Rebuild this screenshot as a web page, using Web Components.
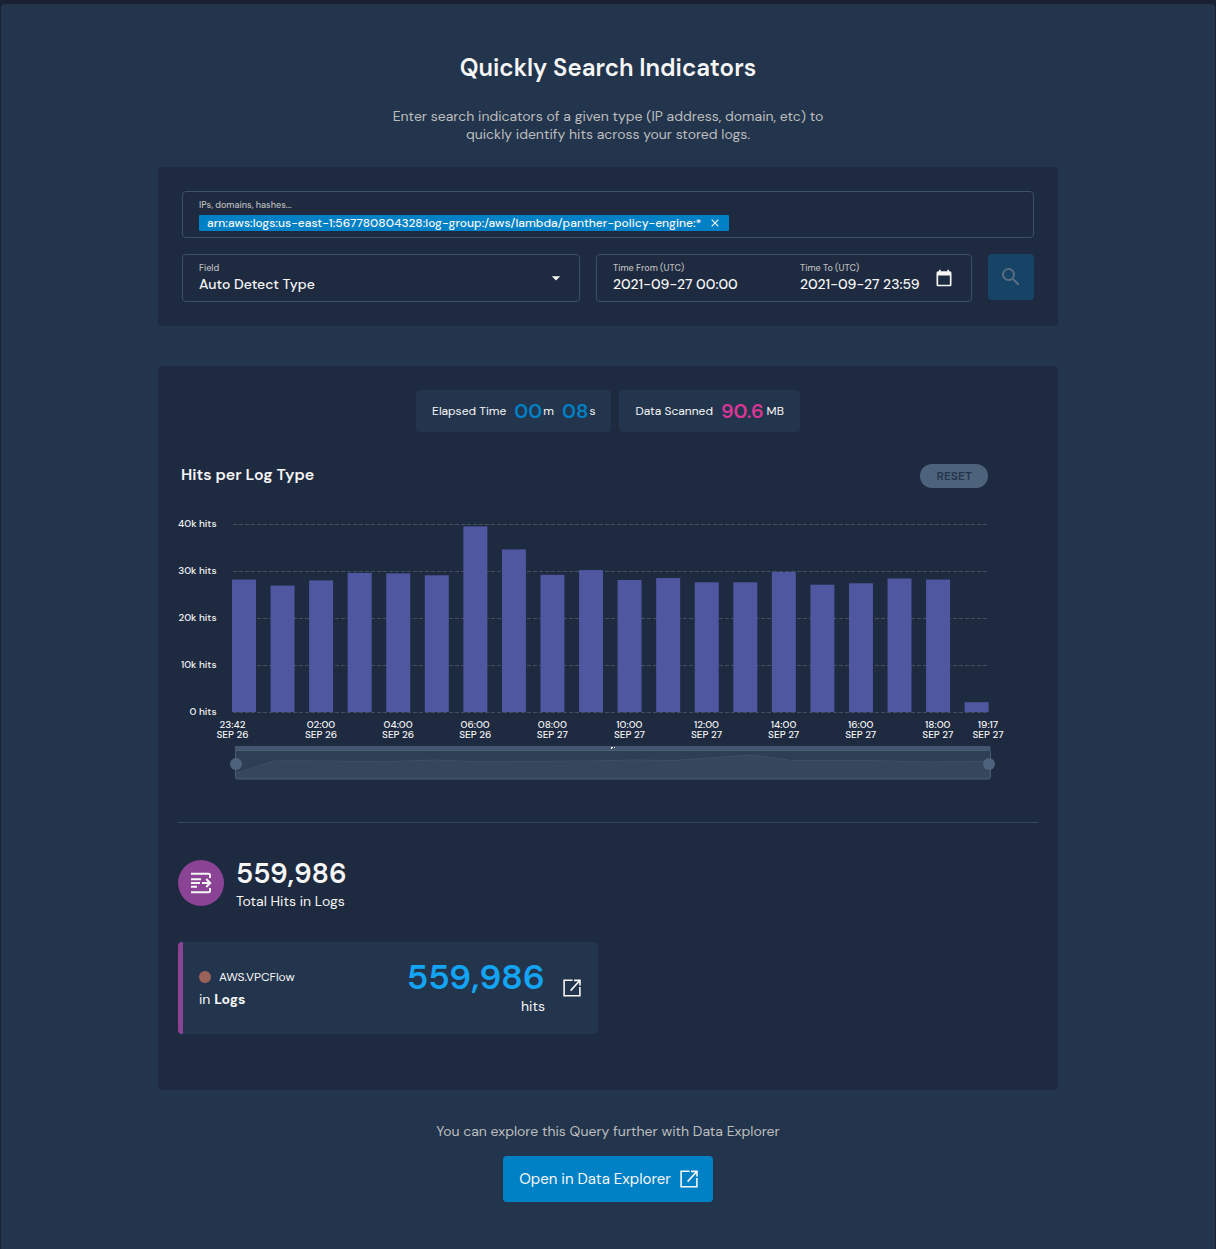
<!DOCTYPE html>
<html lang="en">
<head>
<meta charset="utf-8">
<meta name="viewport" content="width=device-width, initial-scale=1">
<title>Indicator Search</title>
<style>
  :root {
    --page: #1a2133;
    --sheet: #23354d;
    --panel: #1e2a40;
    --line: #3b5069;
    --slate: #4d627b;
    --text: #f6f6f6;
    --muted: #bdbdbd;
    --blue: #0081c6;
    --purple: #8b4395;
  }
  html, body { margin: 0; min-height: 100%; }
  body {
    background: var(--page);
    color: var(--text);
    font: 14px/18px "DM Sans", Inter, "Liberation Sans", sans-serif;
  }
</style>
</head>
<body>
<indicator-search></indicator-search>

<script>
const define = (name, html, setup) => {
  const template = document.createElement('template');
  template.innerHTML = `<style>*{box-sizing:border-box}button,input,select{font:inherit;color:inherit;margin:0}</style>${html}`;
  customElements.define(name, class extends HTMLElement {
    connectedCallback() {
      if (this.shadowRoot) return;
      const root = this.attachShadow({ mode: 'open' });
      root.append(template.content.cloneNode(true));
      if (setup) setup(this, root);
    }
  });
};

const ICONS = {
  external: '<g fill="none" stroke="currentColor" stroke-width="1.6"><path d="M12.6 4.2H4.1V19.8H19.9V11"/><path d="M10.6 14.6 19.6 4.8M14 4.4H20V9.4"/></g>',
  search: '<path fill="currentColor" d="M15.5 14h-.79l-.28-.27A6.47 6.47 0 0 0 16 9.5 6.5 6.5 0 1 0 9.5 16c1.61 0 3.09-.59 4.23-1.57l.27.28v.79l5 4.99L20.49 19zm-6 0a4.5 4.5 0 1 1 0-9 4.5 4.5 0 0 1 0 9z"/>',
  calendar: '<path fill="currentColor" d="M19 4h-1V2h-2v2H8V2H6v2H5a2 2 0 0 0-2 2v14c0 1.1.9 2 2 2h14c1.1 0 2-.9 2-2V6a2 2 0 0 0-2-2zm0 16H5V9h14z"/>',
  caret: '<path fill="currentColor" d="M7 10l5 5 5-5z"/>',
  close: '<path fill="none" stroke="currentColor" stroke-width="1.8" d="M7 7 17 17M17 7 7 17"/>',
  logs: '<g fill="none" stroke="currentColor" stroke-width="2"><path d="M2 2.7H19.5Q21 2.7 21 4.2V7M2 21.3H19.5Q21 21.3 21 19.8V17M2 8.3H12M2 12H11M2 15.7H8M13 12H20.5"/><path d="M17.2 8 21.2 12 17.2 16"/></g>'
};

define('ui-icon', `
  <style>:host{display:block;flex:none;width:24px;height:24px}svg{display:block;width:100%;height:100%}</style>
  <svg viewBox="0 0 24 24" aria-hidden="true"></svg>`,
  (host, root) => { root.querySelector('svg').innerHTML = ICONS[host.getAttribute('name')]; });

define('ui-panel', `
  <style>:host{display:block;background:var(--panel);border-radius:4px}</style><slot></slot>`);

/* Removable chip inside the indicator field */
define('indicator-chip', `
  <style>
    :host{display:flex;align-items:center;gap:6px;height:16px;padding:0 6px 0 8px;border-radius:1px;background:var(--blue);
      font-size:12px;line-height:16px;font-weight:500;white-space:nowrap}
    button{display:block;border:0;padding:0;background:none;cursor:pointer}
    ui-icon{width:16px;height:16px}
  </style>
  <span><slot></slot></span><button type="button" aria-label="Remove"><ui-icon name="close"></ui-icon></button>`);

define('search-form', `
  <style>
    :host{display:block}
    form{display:grid;gap:16px;padding:24px}
    .row{display:grid;grid-template-columns:minmax(0,398fr) minmax(0,376fr) 46px;gap:16px;align-items:start}
    .box{border:1px solid var(--line);border-radius:4px;padding:8px 16px 6px}
    label{display:block;font-size:9px;line-height:10px;font-weight:500;color:var(--muted)}
    input,select{display:block;border:0;padding:0;background:none;outline:0;appearance:none;min-width:0;width:100%;
      height:22px;font-size:14px;font-weight:500}
    .chips{display:flex;align-items:center;margin-top:5px}
    .chips input{flex:1;height:16px}
    .field,.dates{display:flex;align-items:center;height:48px;padding:0 17px 0 16px}
    .field{padding-right:13px}
    .col{flex:1;min-width:0;padding-top:2px}
    .from{flex:187}.to{flex:134}
    .field ui-icon,.dates ui-icon{width:20px;height:20px}
    option{color:#000}
    .go{width:46px;height:46px;border:0;border-radius:4px;padding:11px;background:#154466;color:#5a6d82}
  </style>
  <form>
    <div class="box">
      <label for="q">IPs, domains, hashes...</label>
      <div class="chips">
        <indicator-chip>arn:aws:logs:us-east-1:567780804328:log-group:/aws/lambda/panther-policy-engine:*</indicator-chip>
        <input id="q" type="text">
      </div>
    </div>
    <div class="row">
      <div class="box field">
        <div class="col"><label for="f">Field</label><select id="f"><option>Auto Detect Type</option></select></div>
        <ui-icon name="caret"></ui-icon>
      </div>
      <div class="box dates">
        <div class="col from"><label for="a">Time From (UTC)</label><input id="a" type="text" value="2021-09-27 00:00"></div>
        <div class="col to"><label for="b">Time To (UTC)</label><input id="b" type="text" value="2021-09-27 23:59"></div>
        <ui-icon name="calendar"></ui-icon>
      </div>
      <button class="go" type="button" aria-label="Search" disabled><ui-icon name="search"></ui-icon></button>
    </div>
  </form>`);

define('stat-pill', `
  <style>
    :host{display:flex;align-items:center;gap:8px;height:42px;padding:0 16px;border-radius:4px;background:var(--sheet);font-size:12px}
  </style><slot></slot>`);

define('stat-value', `
  <style>
    :host{display:flex;align-items:center;gap:var(--unit-gap,1px)}
    b{font-size:20px;line-height:24px;font-weight:600;color:var(--tone,var(--blue))}
  </style><b><slot></slot></b><span><slot name="unit"></slot></span>`);

/* Bar chart with a brush strip; the two range inputs are the brush handles */
define('hits-chart', `
  <style>
    :host{display:grid}
    svg{grid-area:1/1;display:block;width:100%;height:auto}
    text{font-size:10px;font-weight:500;fill:var(--text)}
    .brush{grid-area:1/1;align-self:end;display:grid;width:89%;margin:0 0 12px 6%}
    input{grid-area:1/1;appearance:none;width:100%;height:12px;margin:0;background:none;pointer-events:none}
    input::-webkit-slider-thumb{appearance:none;width:12px;height:12px;border-radius:50%;background:var(--slate);pointer-events:auto}
  </style>
  <svg viewBox="0 0 860 270" role="img" aria-label="Hits per log type"></svg>
  <div class="brush">
    <input type="range" aria-label="Range start" value="0">
    <input type="range" aria-label="Range end" value="100">
  </div>`,
  (host, root) => {
    const hits = [28.3,27,28.1,29.7,29.6,29.2,39.6,34.7,29.3,30.3,28.2,28.6,27.7,27.7,29.9,27.2,27.5,28.5,28.3,2.2];
    const base = 200.5, perK = 4.7;
    let out = '';
    for (let k = 0; k <= 40; k += 10) {
      const y = base - k * perK;
      out += `<path d="M55 ${y}H809" stroke="#43505c" stroke-dasharray="4 2"/>`;
      out += `<text x="38.5" y="${y + 2}" text-anchor="end">${k ? k + 'k' : 0} hits</text>`;
    }
    hits.forEach((v, i) => {
      out += `<rect x="${(54 + i * 38.56).toFixed(2)}" y="${(base - v * perK).toFixed(1)}" width="24" height="${(v * perK - 0.5).toFixed(1)}" fill="#4e57a0"/>`;
    });
    const ticks = [['23:42', 26, 54.5]];
    for (let h = 2; h <= 18; h += 2) ticks.push([String(h).padStart(2, '0') + ':00', h < 8 ? 26 : 27, 143 + (h / 2 - 1) * 77.1]);
    ticks.push(['19:17', 27, 810]);
    for (const [time, day, x] of ticks)
      out += `<text text-anchor="middle"><tspan x="${x}" y="216">${time}</tspan><tspan x="${x}" y="226">SEP ${day}</tspan></text>`;
    const area = '58,261 96,249 138,249 212,249.5 257,248 297,249.5 412,249 454,248 497,248.5 537,245.5 574,243 614,248.5 692,248.5 752,250 812,249';
    out += `<rect x="57" y="234" width="755.5" height="5" fill="#44566f"/>
      <rect x="57.5" y="238.5" width="755" height="28.5" rx="2" fill="#2e3e53"/>
      <polygon points="58,267 ${area} 812,267" fill="#36465b"/>
      <polyline points="${area}" fill="none" stroke="#3e4f66"/>
      <rect x="57.5" y="238.5" width="755" height="28.5" rx="2" fill="none" stroke="#4a5e78"/>
      <path d="M433 235h2v1h-1v1h-1zM436 235h1v1h-1z" fill="#f6f6f6"/>`;
    root.querySelector('svg').innerHTML = out;
  });

define('total-hits', `
  <style>
    :host{display:flex;align-items:center;gap:12px}
    .disc{width:46px;height:46px;padding:11px;border-radius:50%;background:var(--purple)}
    strong{display:block;font-size:28px;line-height:38px;font-weight:600}
    span{display:block;line-height:17px}
    strong ::slotted(span){line-height:38px}
  </style>
  <div class="disc"><ui-icon name="logs"></ui-icon></div>
  <div><strong><slot name="count"></slot></strong><span><slot></slot></span></div>`);

define('log-card', `
  <style>
    :host{display:flex;align-items:center;max-width:420px;height:92px;padding:0 14px 0 16px;border-left:5px solid var(--purple);
      border-radius:4px;background:var(--sheet);line-height:22px;box-sizing:border-box}
    .name{display:flex;align-items:center;gap:8px;font-size:12px}
    .name::before{content:"";width:12px;height:12px;border-radius:50%;background:#9a6258}
    .kind{flex:1}
    .count{text-align:right;line-height:18px;padding-bottom:4px}
    .count strong{display:block;font-size:35px;line-height:40px;font-weight:600;color:#13a4f4}
    a{color:inherit;margin-left:15px}
  </style>
  <div class="kind"><div class="name"><slot name="name"></slot></div><div>in <b>Logs</b></div></div>
  <div class="count"><strong><slot name="count"></slot></strong>hits</div>
  <a href="#" aria-label="Open results"><ui-icon name="external"></ui-icon></a>`);

define('search-results', `
  <style>
    :host{display:block;padding:24px 20px 56px}
    .stats{display:flex;justify-content:center;gap:8px}
    header{display:flex;justify-content:space-between;align-items:flex-start;margin:32px 50px 24px 3px}
    h2{margin:0;font-size:16px;line-height:22px;font-weight:600}
    header button{height:24px;padding:0 16px;border:0;border-radius:12px;background:var(--slate);color:var(--sheet);font-size:12px;line-height:24px;font-weight:600}
    hr{margin:40px 0 32px;border:0;border-top:1px solid #33465c}
    log-card{margin-top:32px}
  </style>
  <div class="stats">
    <stat-pill>Elapsed Time <stat-value>00<span slot="unit">m</span></stat-value><stat-value>08<span slot="unit">s</span></stat-value></stat-pill>
    <stat-pill>Data Scanned <stat-value style="--tone:#db3696;--unit-gap:3px">90.6<span slot="unit">MB</span></stat-value></stat-pill>
  </div>
  <header><h2>Hits per Log Type</h2><button type="button">RESET</button></header>
  <hits-chart></hits-chart>
  <hr>
  <total-hits><span slot="count">559,986</span>Total Hits in Logs</total-hits>
  <log-card><span slot="name">AWS.VPCFlow</span><span slot="count">559,986</span></log-card>`);

define('explorer-link', `
  <style>
    :host{display:flex;flex-direction:column;align-items:center;gap:16px}
    p{margin:0;color:var(--muted)}
    a{display:flex;align-items:center;gap:6px;height:46px;padding:0 12px 0 16px;border-radius:4px;background:var(--blue);
      color:inherit;text-decoration:none;font-size:15px}
  </style>
  <p>You can explore this Query further with Data Explorer</p>
  <a href="#"><span>Open in Data Explorer</span><ui-icon name="external"></ui-icon></a>`);

define('indicator-search', `
  <style>
    :host{display:block;padding:4px 1px 0}
    main{min-height:calc(100vh - 4px);padding:48px 24px 47px;border-radius:4px 4px 0 0;background:var(--sheet)}
    .wrap{max-width:900px;margin:0 auto}
    h1{margin:0;text-align:center;font-size:24px;line-height:32px;font-weight:600}
    .lead{max-width:440px;margin:23px auto 24px;text-align:center;color:var(--muted)}
    ui-panel{margin-bottom:40px}
    ui-panel + ui-panel{margin-bottom:32px}
  </style>
  <main><div class="wrap">
    <h1>Quickly Search Indicators</h1>
    <p class="lead">Enter search indicators of a given type (IP address, domain, etc) to quickly identify hits across your stored logs.</p>
    <ui-panel><search-form></search-form></ui-panel>
    <ui-panel><search-results></search-results></ui-panel>
    <explorer-link></explorer-link>
  </div></main>`);
</script>
</body>
</html>
